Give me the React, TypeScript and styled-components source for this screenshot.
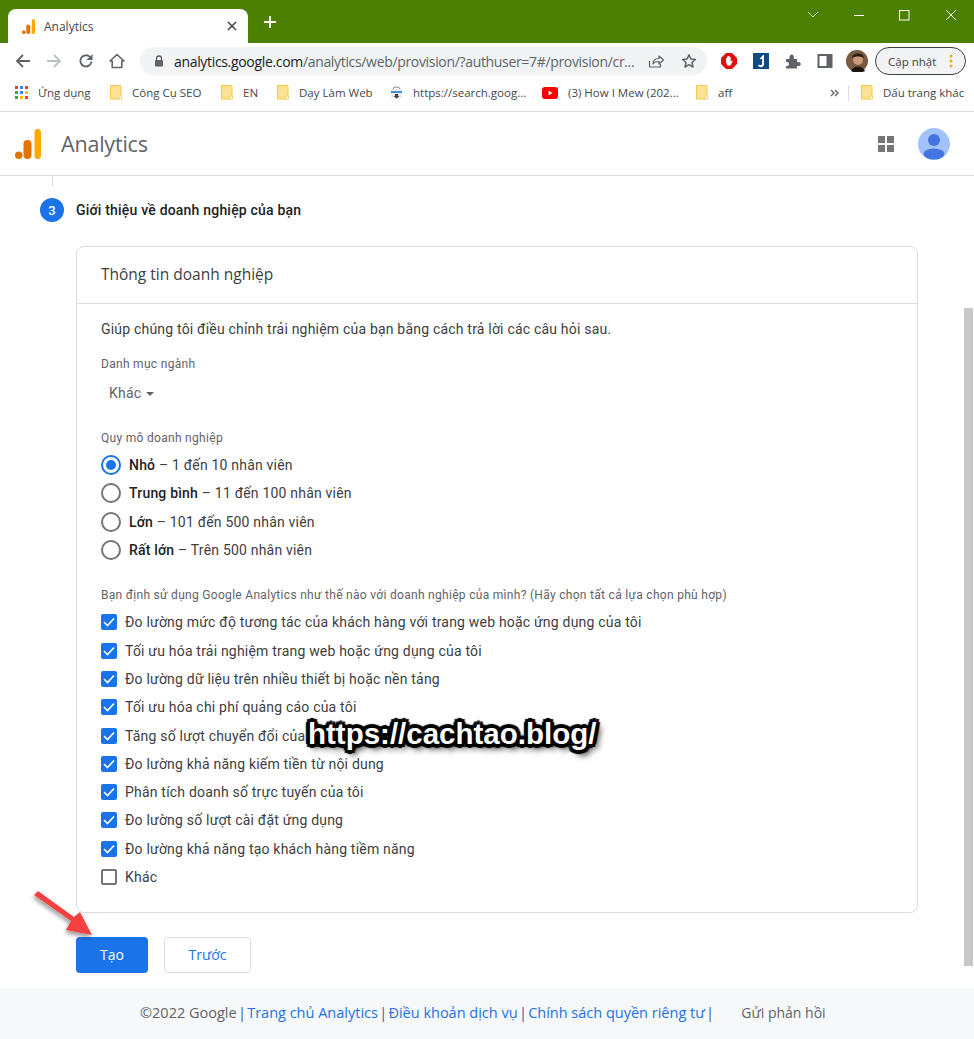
import React from "react";
import styled, { createGlobalStyle } from "styled-components";

const Global = createGlobalStyle`
  html, body { margin: 0; padding: 0; background: #fff; overflow: hidden; }
  * { box-sizing: border-box; }
  body { font-family: Roboto, "Noto Sans", sans-serif; color: #202124; }
`;

const Page = styled.div`
  position: relative;
  width: 974px;
  height: 1039px;
  display: flex;
  flex-direction: column;
  overflow: hidden;
`;

const TitleBar = styled.div`
  height: 43px;
  flex: none;
  background: #4b8003;
  display: flex;
  align-items: flex-end;
  padding-left: 8px;
`;
const Tab = styled.div`
  width: 240px;
  height: 34px;
  background: #fff;
  border-radius: 8px 8px 0 0;
  display: flex;
  align-items: center;
  padding: 0 11px 0 14px;
  gap: 9px;
  font: 12px "Open Sans", "Noto Sans", sans-serif;
  color: #45474a;
`;
const TabTitle = styled.span`
  flex: 1;
`;
const NewTab = styled.div`
  margin: 0 0 8px 15px;
  width: 16px;
  height: 26px;
  display: flex;
  align-items: center;
`;
const WindowControls = styled.div`
  margin-left: auto;
  align-self: flex-start;
  display: flex;
  align-items: center;
  height: 30px;
  gap: 34px;
  padding-right: 17px;
`;

const Toolbar = styled.div`
  height: 32px;
  flex: none;
  margin-top: 2px;
  display: flex;
  align-items: center;
  padding-left: 15px;
`;
const NavIcon = styled.div`
  width: 31.25px;
  height: 28px;
  display: flex;
  align-items: center;
  flex: none;
`;
const AddressBar = styled.div`
  width: 567px;
  height: 28px;
  border-radius: 14px;
  background: #f1f3f4;
  display: flex;
  align-items: center;
  padding: 0 10px 0 14px;
`;
const Url = styled.div`
  margin-left: 10px;
  flex: 1;
  font: 14px "Open Sans", "Noto Sans", sans-serif;
  letter-spacing: -0.33px;
  color: #5f6368;
  white-space: nowrap;
`;
const Domain = styled.span`
  color: #202124;
`;
const AddrIcons = styled.div`
  display: flex;
  gap: 17px;
  align-items: center;
`;
const ExtIcons = styled.div`
  display: flex;
  align-items: center;
  gap: 16px;
  margin-left: 14px;
`;
const Avatar = styled.svg`
  flex: none;
  display: block;
  margin-left: -3px;
`;
const UpdatePill = styled.div`
  margin-left: 7px;
  width: 91px;
  height: 28px;
  border: 1px solid #3c4043;
  border-radius: 14px;
  background: #f1f3f4;
  display: flex;
  align-items: center;
  padding-left: 12px;
  font: 11.5px "Open Sans", "Noto Sans", sans-serif;
  color: #3c4043;
  gap: 13px;
`;

const Bookmarks = styled.div`
  height: 35px;
  flex: none;
  border-bottom: 1px solid #dadce0;
  display: flex;
  align-items: center;
  padding-left: 15px;
  font: 11.5px "Open Sans", "Noto Sans", sans-serif;
  color: #45474a;
  padding-bottom: 3px;
`;
const Bookmark = styled.div<{ $w: number }>`
  width: ${(p) => p.$w}px;
  flex: none;
  display: flex;
  align-items: center;
  gap: 10px;
  white-space: nowrap;
  overflow: hidden;
`;
const Chevrons = styled.div`
  width: 18px;
  flex: none;
`;
const BookmarkSep = styled.div`
  width: 1px;
  height: 16px;
  background: #dadce0;
  margin-right: 12px;
`;

const AppHeader = styled.header`
  height: 64px;
  flex: none;
  border-bottom: 1px solid #dadce0;
  display: flex;
  align-items: center;
  padding: 0 24px 0 15px;
`;
const AppName = styled.div`
  margin-left: 20px;
  font: 21.5px "Open Sans", Roboto, sans-serif;
  letter-spacing: -0.2px;
  color: #5f6368;
  flex: 1;
`;
const AppGrid = styled.div`
  display: grid;
  grid-template-columns: 7px 7px;
  gap: 2px;
  margin-right: 24px;
`;
const GridDot = styled.i`
  width: 7px;
  height: 7px;
  background: #757575;
  display: block;
`;

const Main = styled.main`
  flex: 1;
  min-height: 0;
  padding: 0 56px 0 40px;
`;
const StepLine = styled.div`
  width: 1px;
  height: 10px;
  background: #dadce0;
  margin-left: 12px;
`;
const StepRow = styled.div`
  display: flex;
  align-items: center;
  gap: 12px;
  height: 24px;
  margin-top: 12px;
`;
const StepNum = styled.div`
  width: 24px;
  height: 24px;
  border-radius: 50%;
  background: #1a73e8;
  color: #fff;
  font: 500 13px Roboto, sans-serif;
  display: flex;
  align-items: center;
  justify-content: center;
`;
const StepTitle = styled.div`
  font: 500 14px/20px Roboto, sans-serif;
  letter-spacing: 0.2px;
  color: #202124;
`;
const Card = styled.section`
  margin: 24px 0 0 36px;
  width: 842px;
  height: 667px;
  border: 1px solid #dadce0;
  border-radius: 8px;
`;
const CardHead = styled.div`
  height: 57px;
  border-bottom: 1px solid #dadce0;
  padding: 15px 24px 0;
  font: 15.5px/24px "Open Sans", Roboto, sans-serif;
  color: #3c4043;
`;
const CardBody = styled.div`
  padding: 15px 24px 0;
`;
const Intro = styled.div`
  font: 14px/20px Roboto, sans-serif;
  letter-spacing: 0.2px;
  color: #3c4043;
`;
const FieldLabel = styled.div<{ $top: number }>`
  margin-top: ${(p) => p.$top}px;
  font: 12px/16px Roboto, sans-serif;
  letter-spacing: 0.3px;
  color: #5f6368;
`;
const Select = styled.div`
  margin: 11px 0 0 8px;
  height: 20px;
  display: flex;
  align-items: center;
  gap: 5px;
  font: 14px/20px Roboto, sans-serif;
  letter-spacing: 0.2px;
  color: #5f6368;
`;
const Caret = styled.i`
  width: 0;
  height: 0;
  border: 4px solid transparent;
  border-top-color: #5f6368;
  border-bottom: 0;
  margin-top: 1px;
`;
const RadioList = styled.div`
  margin-top: 5px;
  display: flex;
  flex-direction: column;
`;
const RadioRow = styled.div`
  height: 28.3px;
  display: flex;
  align-items: center;
  gap: 8px;
  font: 14px/20px Roboto, sans-serif;
  letter-spacing: 0.2px;
  color: #3c4043;
`;
const RadioCircle = styled.div<{ $on?: boolean }>`
  width: 20px;
  height: 20px;
  border-radius: 50%;
  border: 2px solid ${(p) => (p.$on ? "#1a73e8" : "#757575")};
  display: flex;
  align-items: center;
  justify-content: center;
  &::after {
    content: "";
    width: 10px;
    height: 10px;
    border-radius: 50%;
    background: ${(p) => (p.$on ? "#1a73e8" : "transparent")};
  }
`;
const Strong = styled.b`
  font-weight: 500;
  color: #202124;
`;
const CheckList = styled.div`
  margin-top: 5px;
  display: flex;
  flex-direction: column;
`;
const CheckRow = styled.div`
  height: 28.3px;
  display: flex;
  align-items: center;
  gap: 8px;
  font: 14px/20px Roboto, sans-serif;
  letter-spacing: 0.2px;
  color: #3c4043;
`;
const CheckBox = styled.div<{ $on?: boolean }>`
  width: 16px;
  height: 16px;
  border-radius: 2px;
  flex: none;
  background: ${(p) => (p.$on ? "#1a73e8" : "#fff")};
  border: ${(p) => (p.$on ? "none" : "2px solid #757575")};
  display: flex;
  align-items: center;
  justify-content: center;
`;
const Actions = styled.div`
  margin: 24px 0 0 36px;
  display: flex;
  gap: 16px;
`;
const PrimaryBtn = styled.div`
  width: 72px;
  height: 36px;
  border-radius: 4px;
  background: #1a73e8;
  color: #fff;
  font: 500 14px/36px "Open Sans", Roboto, sans-serif;
  text-align: center;
`;
const SecondaryBtn = styled.div`
  width: 87px;
  height: 36px;
  border-radius: 4px;
  border: 1px solid #dadce0;
  color: #1a73e8;
  font: 500 14px/34px "Open Sans", Roboto, sans-serif;
  text-align: center;
`;

const Footer = styled.footer`
  height: 51px;
  flex: none;
  background: #f7f8f9;
  display: flex;
  align-items: center;
  padding: 0 0 2px 140px;
  font: 14.5px/20px "Open Sans", Roboto, sans-serif;
  color: #5f6368;
  white-space: pre;
`;
const FooterLink = styled.span`
  color: #1a73e8;
`;
const FooterSep = styled.span`
  width: 10.5px;
  text-align: center;
  flex: none;
  color: #3c5a9a;
`;
const Feedback = styled.span`
  margin-left: 26px;
  font-size: 14px;
`;

const Scrollbar = styled.div`
  position: absolute;
  right: 1px;
  top: 308px;
  width: 9px;
  height: 658px;
  background: #c8c8c8;
`;
const Watermark = styled.div`
  position: absolute;
  left: 308px;
  top: 714px;
  font: 700 29.5px/40px "Liberation Sans", Arial, sans-serif;
  color: #fff;
  white-space: nowrap;
  text-shadow: -3px -3px 1px #000, 3px -3px 1px #000, -3px 3px 1px #000, 3px 3px 1px #000,
    0 -4px 1px #000, 0 4px 1px #000, -4px 0 1px #000, 4px 0 1px #000, 4px 5px 6px #000;
`;
const Arrow = styled.svg`
  position: absolute;
  left: 28px;
  top: 884px;
`;

const AnalyticsLogo = ({ w, h }: { w: number; h: number }) => (
  <svg width={w} height={h} viewBox="0 0 26 30" preserveAspectRatio="none" style={{ flex: "none", display: "block" }}>
    <rect x="19.500" y="0" width="6.500" height="30" rx="3.250" fill="#f9ab00" />
    <rect x="8.500" y="11" width="8" height="19" rx="4" fill="#e37400" />
    <circle cx="3.700" cy="26.300" r="3.700" fill="#e37400" />
  </svg>
);
const Folder = () => (
  <svg width="12" height="15" viewBox="0 0 12 15" style={{ flex: "none" }}>
    <path d="M.5.5h10.5v13.5H.5z" fill="#fde293" stroke="#f2c94c" />
    <rect x="9" y="11" width="2.5" height="3" fill="#fff" stroke="#f2c94c" strokeWidth=".7" />
  </svg>
);
const I = ({ w = 16, h = 16, children }: { w?: number; h?: number; children: React.ReactNode }) => (
  <svg width={w} height={h} viewBox={`0 0 ${w} ${h}`} fill="none" style={{ flex: "none", display: "block" }}>
    {children}
  </svg>
);

const checks: [string, boolean][] = [
  ["Đo lường mức độ tương tác của khách hàng với trang web hoặc ứng dụng của tôi", true],
  ["Tối ưu hóa trải nghiệm trang web hoặc ứng dụng của tôi", true],
  ["Đo lường dữ liệu trên nhiều thiết bị hoặc nền tảng", true],
  ["Tối ưu hóa chi phí quảng cáo của tôi", true],
  ["Tăng số lượt chuyển đổi của tôi", true],
  ["Đo lường khả năng kiếm tiền từ nội dung", true],
  ["Phân tích doanh số trực tuyến của tôi", true],
  ["Đo lường số lượt cài đặt ứng dụng", true],
  ["Đo lường khả năng tạo khách hàng tiềm năng", true],
  ["Khác", false],
];
const radios: [string, string, boolean][] = [
  ["Nhỏ", " – 1 đến 10 nhân viên", true],
  ["Trung bình", " – 11 đến 100 nhân viên", false],
  ["Lớn", " – 101 đến 500 nhân viên", false],
  ["Rất lớn", " – Trên 500 nhân viên", false],
];
const appColors = ["#ea4335", "#4285f4", "#ea4335", "#34a853", "#4285f4", "#fbbc04", "#34a853", "#fbbc04", "#ea4335"];

export default function App() {
  return (
    <Page>
      <Global />
      <TitleBar>
        <Tab>
          <AnalyticsLogo w={13} h={15} />
          <TabTitle>Analytics</TabTitle>
          <I w={10} h={10}>
            <path d="M1 1l8 8M9 1l-8 8" stroke="#45474a" strokeWidth="1.6" />
          </I>
        </Tab>
        <NewTab>
          <I w={14} h={14}>
            <path d="M7 1v12M1 7h12" stroke="#fff" strokeWidth="1.8" />
          </I>
        </NewTab>
        <WindowControls>
          <I w={12} h={8}>
            <path d="M1 1l5 5 5-5" stroke="#cfe0b8" strokeWidth="1" />
          </I>
          <I w={12} h={12}>
            <path d="M1 6.5h10" stroke="#fff" strokeWidth="1" />
          </I>
          <I w={12} h={12}>
            <rect x=".5" y="1.5" width="9.5" height="9.5" stroke="#fff" />
          </I>
          <I w={12} h={12}>
            <path d="M1 1l10 10M11 1L1 11" stroke="#fff" strokeWidth="1" />
          </I>
        </WindowControls>
      </TitleBar>

      <Toolbar>
        <NavIcon>
          <I>
            <path d="M15 8H2M8 2L2 8l6 6" stroke="#5f6368" strokeWidth="1.8" />
          </I>
        </NavIcon>
        <NavIcon>
          <I>
            <path d="M1 8h13M8 2l6 6-6 6" stroke="#bdc1c6" strokeWidth="1.8" />
          </I>
        </NavIcon>
        <NavIcon>
          <I>
            <path d="M13.5 8.5A5.6 5.6 0 1 1 12 4" stroke="#5f6368" strokeWidth="1.8" />
            <path d="M14.5 1v6h-6z" fill="#5f6368" />
          </I>
        </NavIcon>
        <NavIcon>
          <I>
            <path d="M8 1.5L1 8h2.2v6.5h9.6V8H15z" stroke="#5f6368" strokeWidth="1.6" strokeLinejoin="round" />
          </I>
        </NavIcon>
        <AddressBar>
          <I w={10} h={12}>
            <path d="M2.5 5V3.5a2.5 2.5 0 0 1 5 0V5" stroke="#5f6368" strokeWidth="1.3" />
            <rect x="1" y="5" width="8" height="6.5" rx="1" fill="#5f6368" />
          </I>
          <Url>
            <Domain>analytics.google.com</Domain>/analytics/web/provision/?authuser=7#/provision/cr...
          </Url>
          <AddrIcons>
            <I>
              <path d="M1.5 8v6h11v-3" stroke="#5f6368" strokeWidth="1.2" />
              <path d="M5 11c0-4 3-5.500 6-5.500V3l4.500 4-4.500 4V8.500C8 8.500 6 9 5 11z" stroke="#5f6368" strokeWidth="1.2" strokeLinejoin="round" />
            </I>
            <I>
              <path d="M8 1.800l1.900 4.200 4.500.5-3.400 3 1 4.500L8 11.700 4 14l1-4.500-3.400-3 4.500-.5z" stroke="#5f6368" strokeWidth="1.500" strokeLinejoin="round" />
            </I>
          </AddrIcons>
        </AddressBar>
        <ExtIcons>
          <I>
            <path d="M5 0h6l5 5v6l-5 5H5l-5-5V5z" fill="#e0100f" />
            <path d="M5 8V5h1v2-3.500h1.200V7 3h1.300v4-3h1.200v5l1.200-1.500.8.500-2 4.500H7C6 12.500 5 10 5 8z" fill="#fff" />
          </I>
          <I>
            <rect width="16" height="16" fill="#0f4c81" />
            <path d="M10 2L6.500 6h2.500v5c0 1.500-2 1.500-3 .5l-1 1.500c2 2 6 1.500 6-2V2z" fill="#fff" />
          </I>
          <I>
            <path d="M1 6h3.500c-.5-3 1-4.500 2.300-4.500S9.500 3 8.800 6H12v3c3-.5 3.800 1 3.800 2s-1 2.500-3.800 2v2.500H1V13c2.500.5 3-1 3-2s-.500-2.500-3-2z" fill="#5f6368" />
          </I>
          <I>
            <rect x="1.500" y="2" width="13" height="12" stroke="#5f6368" strokeWidth="2" />
            <rect x="9.500" y="2" width="5" height="12" fill="#5f6368" />
          </I>
          <Avatar width="22" height="22" viewBox="0 0 22 22">
            <circle cx="11" cy="11" r="11" fill="#7a5a42" />
            <circle cx="12" cy="10" r="5" fill="#c99a7c" />
            <path d="M6 8c0-6 12-6 12 0-3-2-9-2-12 0z" fill="#2a1c16" />
            <path d="M5 21c2-6 12-6 14 0-3 2-11 2-14 0z" fill="#1d1512" />
          </Avatar>
        </ExtIcons>
        <UpdatePill>
          <span>Cập nhật</span>
          <I w={4} h={14}>
            <circle cx="2" cy="2" r="1.500" fill="#f9ab00" />
            <circle cx="2" cy="7" r="1.500" fill="#f9ab00" />
            <circle cx="2" cy="12" r="1.500" fill="#f9ab00" />
          </I>
        </UpdatePill>
      </Toolbar>

      <Bookmarks>
        <Bookmark $w={95}>
          <I w={13} h={13}>
            {appColors.map((c, i) => (
              <rect key={i} x={(i % 3) * 5} y={Math.floor(i / 3) * 5} width="3" height="3" fill={c} />
            ))}
          </I>
          <span>Ứng dụng</span>
        </Bookmark>
        <Bookmark $w={111}>
          <Folder />
          <span>Công Cụ SEO</span>
        </Bookmark>
        <Bookmark $w={56}>
          <Folder />
          <span>EN</span>
        </Bookmark>
        <Bookmark $w={113}>
          <Folder />
          <span>Dạy Làm Web</span>
        </Bookmark>
        <Bookmark $w={152}>
          <I w={13} h={14}>
            <rect x="1" y="3" width="11" height="9" rx="1" fill="#e8eaed" />
            <path d="M3 3a3.500 2 0 0 1 7 0" stroke="#80868b" />
            <rect x="1" y="5" width="11" height="2" fill="#4a90d9" />
            <path d="M5 8h3v2h1.500l-3 2.500-3-2.500H5z" fill="#3c4043" />
          </I>
          <span>https://search.goog...</span>
        </Bookmark>
        <Bookmark $w={154}>
          <I w={16} h={12}>
            <rect width="16" height="12" rx="3" fill="#f00" />
            <path d="M6.500 3.500v5l4-2.500z" fill="#fff" />
          </I>
          <span>(3) How I Mew (202...</span>
        </Bookmark>
        <Bookmark $w={134}>
          <Folder />
          <span>aff</span>
        </Bookmark>
        <Chevrons>
          <I w={9} h={8}>
            <path d="M1 1l3 3-3 3M5 1l3 3-3 3" stroke="#5f6368" strokeWidth="1.400" />
          </I>
        </Chevrons>
        <BookmarkSep />
        <Bookmark $w={105}>
          <Folder />
          <span>Dấu trang khác</span>
        </Bookmark>
      </Bookmarks>

      <AppHeader>
        <AnalyticsLogo w={26} h={30} />
        <AppName>Analytics</AppName>
        <AppGrid>
          <GridDot />
          <GridDot />
          <GridDot />
          <GridDot />
        </AppGrid>
        <svg width="32" height="32" viewBox="0 0 32 32">
          <defs>
            <clipPath id="avatarClip">
              <circle cx="16" cy="16" r="16" />
            </clipPath>
          </defs>
          <circle cx="16" cy="16" r="16" fill="#a0c3ff" />
          <g clipPath="url(#avatarClip)" fill="#4374e0">
            <circle cx="16" cy="12" r="6" />
            <ellipse cx="16" cy="26" rx="10.500" ry="5.500" />
          </g>
        </svg>
      </AppHeader>

      <Main>
        <StepLine />
        <StepRow>
          <StepNum>3</StepNum>
          <StepTitle>Giới thiệu về doanh nghiệp của bạn</StepTitle>
        </StepRow>
        <Card>
          <CardHead>Thông tin doanh nghiệp</CardHead>
          <CardBody>
            <Intro>Giúp chúng tôi điều chỉnh trải nghiệm của bạn bằng cách trả lời các câu hỏi sau.</Intro>
            <FieldLabel $top={17}>Danh mục ngành</FieldLabel>
            <Select>
              <span>Khác</span>
              <Caret />
            </Select>
            <FieldLabel $top={27}>Quy mô doanh nghiệp</FieldLabel>
            <RadioList>
              {radios.map(([b, t, on]) => (
                <RadioRow key={b}>
                  <RadioCircle $on={on} />
                  <span>
                    <Strong>{b}</Strong>
                    {t}
                  </span>
                </RadioRow>
              ))}
            </RadioList>
            <FieldLabel $top={23}>
              Bạn định sử dụng Google Analytics như thế nào với doanh nghiệp của mình? (Hãy chọn tất cả lựa chọn phù hợp)
            </FieldLabel>
            <CheckList>
              {checks.map(([t, on]) => (
                <CheckRow key={t}>
                  <CheckBox $on={on}>
                    {on && (
                      <I w={12} h={10}>
                        <path d="M1 5l3.500 3.500L11 1.500" stroke="#fff" strokeWidth="1.600" />
                      </I>
                    )}
                  </CheckBox>
                  <span>{t}</span>
                </CheckRow>
              ))}
            </CheckList>
          </CardBody>
        </Card>
        <Actions>
          <PrimaryBtn>Tạo</PrimaryBtn>
          <SecondaryBtn>Trước</SecondaryBtn>
        </Actions>
      </Main>

      <Footer>
        <span>©2022 Google</span>
        <FooterSep>|</FooterSep>
        <FooterLink>Trang chủ Analytics</FooterLink>
        <FooterSep>|</FooterSep>
        <FooterLink>Điều khoản dịch vụ</FooterLink>
        <FooterSep>|</FooterSep>
        <FooterLink>Chính sách quyền riêng tư</FooterLink>
        <FooterSep>|</FooterSep>
        <Feedback>Gửi phản hồi</Feedback>
      </Footer>

      <Scrollbar />
      <Watermark>https://cachtao.blog/</Watermark>
      <Arrow width="70" height="60" viewBox="0 0 70 60">
        <defs>
          <filter id="arrowShadow" x="-20%" y="-20%" width="150%" height="150%">
            <feDropShadow dx="-1" dy="3" stdDeviation="2" floodColor="#000" floodOpacity="0.4" />
          </filter>
        </defs>
        <path d="M6 11L10 7l36 26 6-5 12 23-26-5 5-9z" fill="#f44040" filter="url(#arrowShadow)" />
      </Arrow>
    </Page>
  );
}
